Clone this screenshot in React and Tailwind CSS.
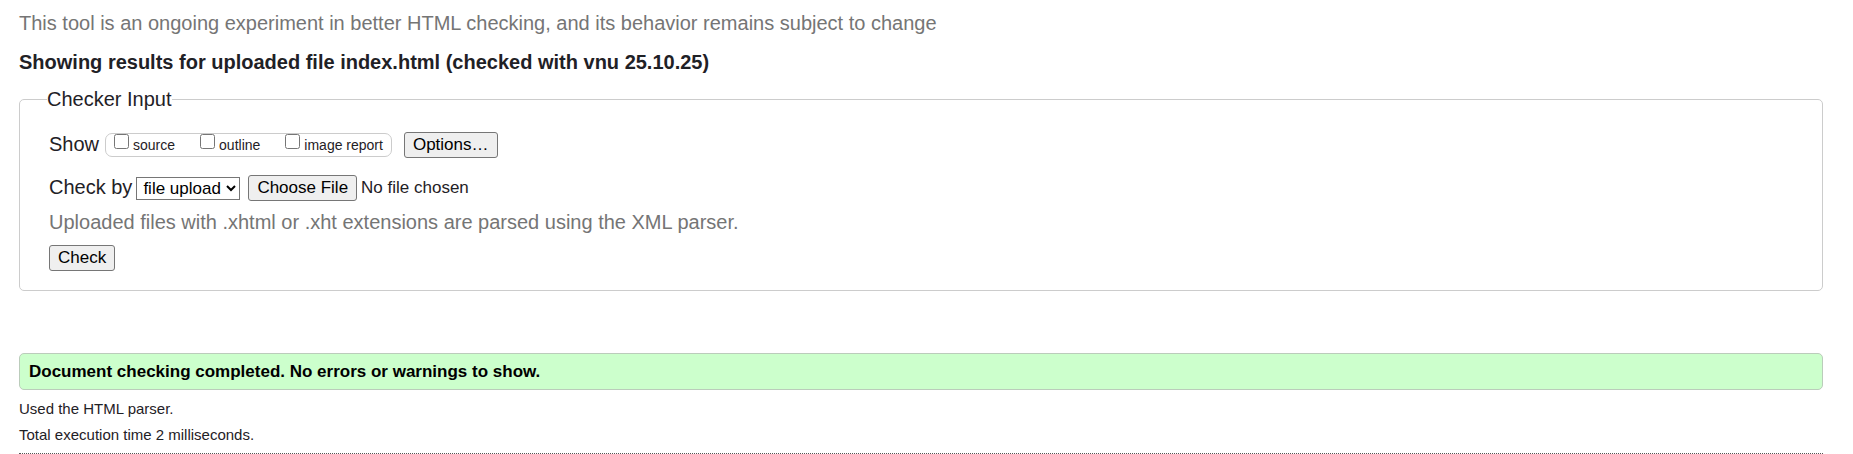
const options = ["source", "outline", "image report"];

const buttonStyle =
  "rounded-[3px] border border-[#767676] bg-[#efefef] px-2 text-[17px] leading-6 text-black";

export default function App() {
  return (
    <main className="pt-[11px] pr-[30px] pl-[19px] font-['Liberation_Sans',Arial,sans-serif] text-[20px] leading-6 text-[#1f2126]">
      <p className="text-[#757575]">
        This tool is an ongoing experiment in better HTML checking, and its behavior remains subject to change
      </p>
      <h1 className="mt-[15px] font-bold">
        Showing results for uploaded file index.html (checked with vnu 25.10.25)
      </h1>
      <form className="mt-[13px]" onSubmit={(e) => e.preventDefault()}>
        <fieldset className="rounded-[5px] border border-[#cccccc] px-[29px] pb-[19px]">
          <legend className="-ml-[2px]">Checker Input</legend>
          <div className="mt-[21px] flex items-center">
            <span className="self-start">Show</span>
            <div className="ml-1.5 flex h-6 gap-[25px] rounded-[7px] border border-[#cccccc] px-2 text-[14px]">
              {options.map((name) => (
                <label key={name} className="flex items-start gap-1 leading-[22px]">
                  <input type="checkbox" className="size-[15px]" />
                  {name}
                </label>
              ))}
            </div>
            <button type="button" className={`ml-3 ${buttonStyle}`}>Options…</button>
          </div>
          <div className="mt-[17px] flex items-center">
            <label htmlFor="docselect" className="self-start">Check by</label>
            <select
              id="docselect"
              defaultValue="file"
              className="ml-1 h-[23px] rounded-none border border-[#767676] bg-white px-0.5 text-[17px] leading-5 text-black"
            >
              <option value="address">address</option>
              <option value="file">file upload</option>
              <option value="text">text input</option>
            </select>
            <input
              type="file"
              aria-label="File to check"
              className="ml-2 text-[17px] leading-6 file:mr-1 file:rounded-[3px] file:border file:border-solid file:border-[#767676] file:bg-[#efefef] file:px-2 file:text-[17px] file:leading-6 file:text-black"
            />
          </div>
          <p className="mt-[9px] text-[#757575]">
            Uploaded files with .xhtml or .xht extensions are parsed using the XML parser.
          </p>
          <button type="submit" className={`mt-[11px] block ${buttonStyle}`}>Check</button>
        </fieldset>
      </form>
      <section className="mt-[62px]">
        <p className="rounded-[5px] border border-[#bbccbb] bg-[#ccffcc] px-[9px] py-[5px] text-[17px] leading-[25px] font-bold text-black">
          Document checking completed. No errors or warnings to show.
        </p>
        <div className="border-b border-dotted border-[#555555] pt-[6px] pb-[5px] text-[15px] leading-[26px]">
          <p>Used the HTML parser.</p>
          <p>Total execution time 2 milliseconds.</p>
        </div>
      </section>
    </main>
  );
}
